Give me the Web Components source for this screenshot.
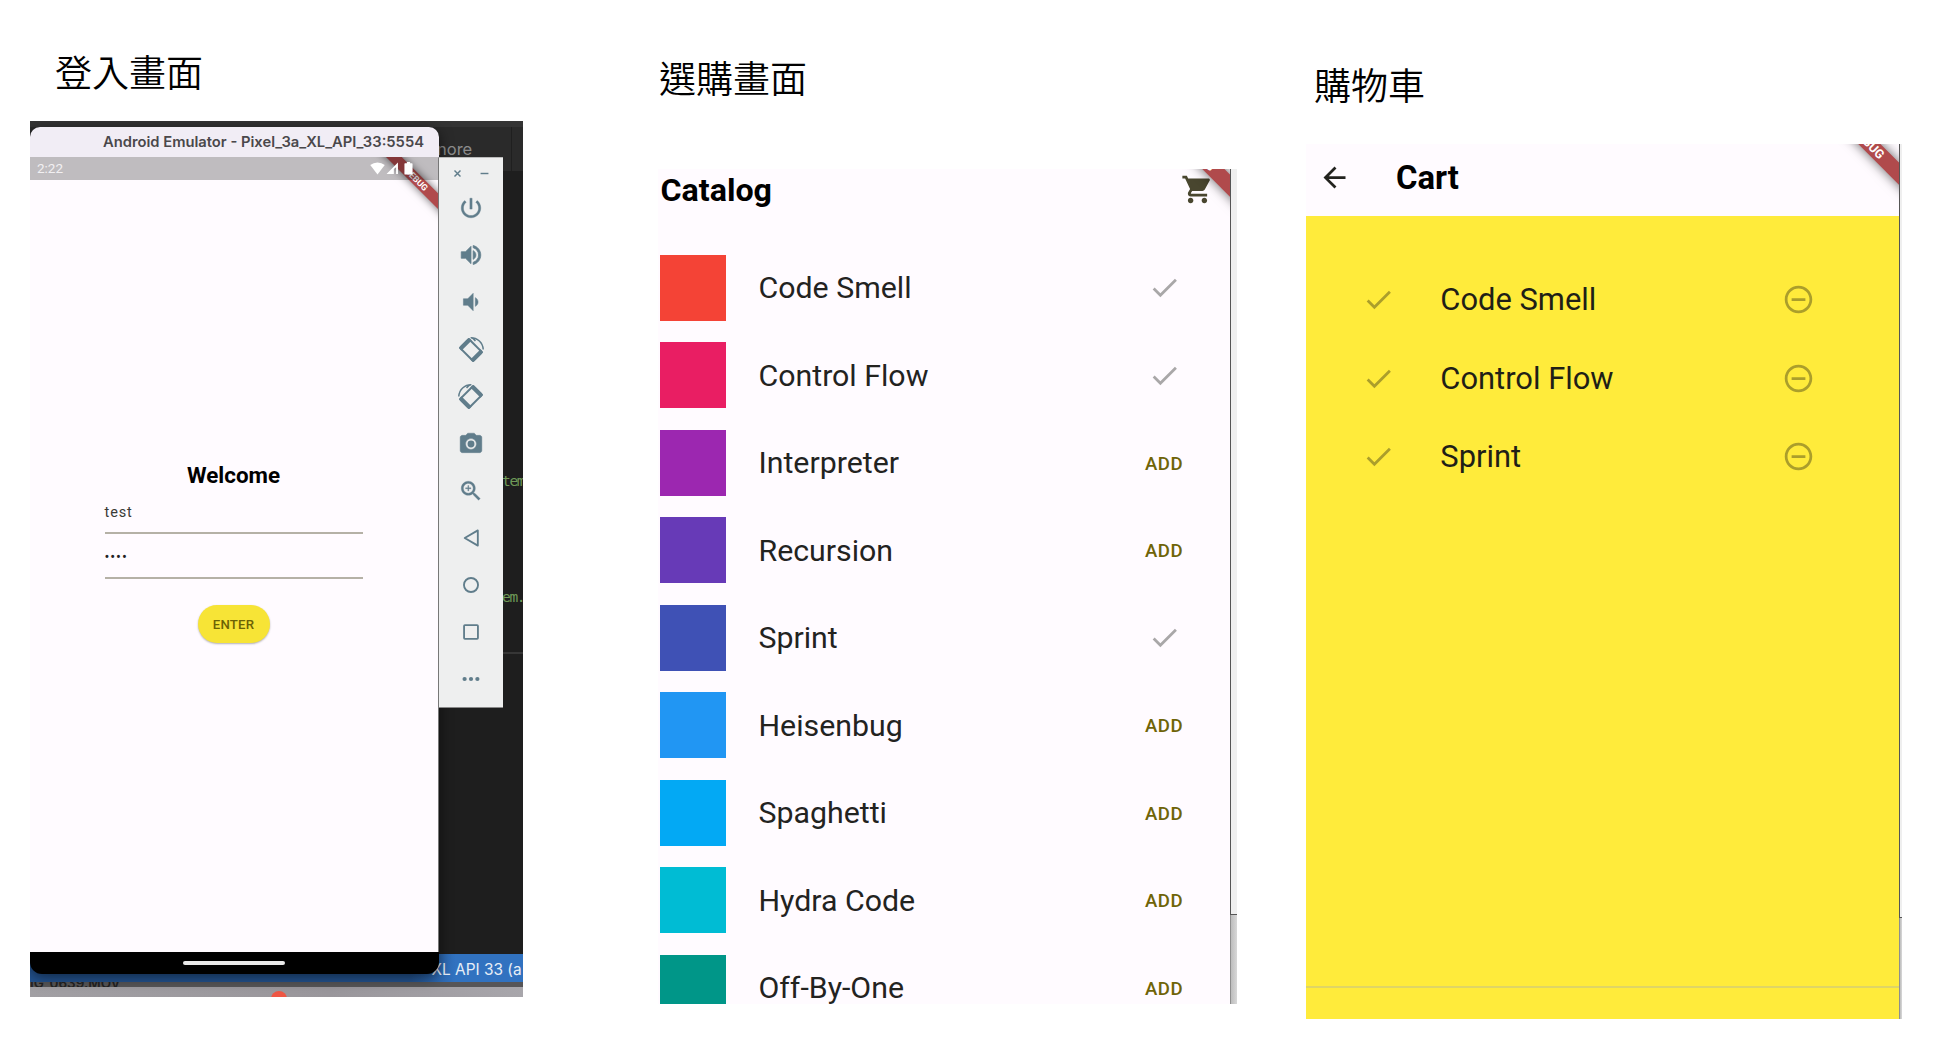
<!DOCTYPE html>
<html lang="zh-Hant">
<head>
<meta charset="utf-8">
<title>登入、選購、購物車</title>
<style>
body{margin:0;background:#fff;display:flex;align-items:flex-start;width:1944px;height:1046px;overflow:hidden;font-family:Roboto,"Liberation Sans",sans-serif}
</style>
</head>
<body>
<screen-figure label="登入畫面" style="--left:30px;--top:44px;--indent:25px;--gap:23px;--w:493px"><emulator-desktop></emulator-desktop></screen-figure>
<screen-figure label="選購畫面" style="--left:135px;--top:50px;--indent:1px;--gap:65px;--w:579px"><catalog-screen></catalog-screen></screen-figure>
<screen-figure label="購物車" style="--left:69px;--top:57px;--indent:8px;--gap:33px;--w:596px"><cart-screen></cart-screen></screen-figure>
<script>
function define(name, render) {
  customElements.define(name, class extends HTMLElement {
    connectedCallback() {
      if (this.shadowRoot) return;
      this.attachShadow({mode: 'open'}).innerHTML = render(this);
    }
  });
}

const ICONS = {
  check: '<path d="M9 16.17 4.83 12l-1.42 1.41L9 19 21 7l-1.41-1.41z"/>',
  cart: '<path d="M7 18c-1.1 0-1.99.9-1.99 2S5.9 22 7 22s2-.9 2-2-.9-2-2-2zM1 2v2h2l3.6 7.59-1.35 2.45c-.16.28-.25.61-.25.96 0 1.1.9 2 2 2h12v-2H7.42c-.14 0-.25-.11-.25-.25l.03-.12.9-1.63h7.45c.75 0 1.41-.41 1.75-1.03l3.58-6.49c.08-.14.12-.31.12-.48 0-.55-.45-1-1-1H5.21l-.94-2H1zm16 16c-1.1 0-1.99.9-1.99 2s.89 2 1.99 2 2-.9 2-2-.9-2-2-2z"/>',
  back: '<path d="M20 11H7.83l5.59-5.59L12 4l-8 8 8 8 1.41-1.41L7.83 13H20v-2z"/>',
  remove: '<path d="M7 11v2h10v-2H7zm5-9C6.48 2 2 6.48 2 12s4.48 10 10 10 10-4.48 10-10S17.52 2 12 2zm0 18c-4.41 0-8-3.59-8-8s3.59-8 8-8 8 3.59 8 8-3.59 8-8 8z"/>',
  power: '<path d="M13 3h-2v10h2V3zm4.83 2.17-1.42 1.42C17.99 7.86 19 9.81 19 12c0 3.87-3.13 7-7 7s-7-3.13-7-7c0-2.19 1.01-4.14 2.58-5.42L6.17 5.17C4.23 6.82 3 9.26 3 12c0 4.97 4.03 9 9 9s9-4.03 9-9c0-2.74-1.23-5.18-3.17-6.83z" stroke="currentColor" stroke-width=".4"/>',
  volup: '<path d="M3 9v6h4l5 5V4L7 9H3zm13.5 3c0-1.77-1.02-3.29-2.5-4.03v8.05c1.48-.73 2.5-2.25 2.5-4.02zM14 3.23v2.06c2.89.86 5 3.54 5 6.71s-2.11 5.85-5 6.71v2.06c4.01-.91 7-4.49 7-8.77s-2.99-7.86-7-8.77z" stroke="currentColor" stroke-width=".7"/>',
  voldown: '<path d="M18.5 12c0-1.77-1.02-3.29-2.5-4.03v8.05c1.48-.73 2.5-2.25 2.5-4.02zM5 9v6h4l5 5V4L9 9H5z" stroke="currentColor" stroke-width=".5"/>',
  rotright: '<g transform="rotate(45 12 12)"><rect x="3.4" y="6.2" width="17.2" height="11.6" rx="1" fill="none" stroke="currentColor" stroke-width="1.9"/><path d="M2.5 6.2q0-.9.9-.9h2.8v13.4H3.4q-.9 0-.9-.9zM21.5 6.2q0-.9-.9-.9h-2.8v13.4h2.8q.9 0 .9-.9z"/></g><path d="M11.7.7c6.3 0 11.2 4.5 11.6 10.8" fill="none" stroke="currentColor" stroke-width="1.4"/><path d="M11.5.1 15.6 4.2l1-1-1.6-2z"/>',
  camera: '<circle cx="12" cy="12" r="3.2"/><path d="M9 2 7.17 4H4c-1.1 0-2 .9-2 2v12c0 1.1.9 2 2 2h16c1.1 0 2-.9 2-2V6c0-1.1-.9-2-2-2h-3.17L15 2H9zm3 15c-2.76 0-5-2.24-5-5s2.24-5 5-5 5 2.24 5 5-2.24 5-5 5z" stroke="currentColor" stroke-width=".4"/>',
  zoom: '<path d="M15.5 14h-.79l-.28-.27C15.41 12.59 16 11.11 16 9.5 16 5.91 13.09 3 9.5 3S3 5.91 3 9.5 5.91 16 9.5 16c1.61 0 3.09-.59 4.23-1.57l.27.28v.79l5 4.99L20.49 19l-4.99-5zm-6 0C7.01 14 5 11.99 5 9.5S7.01 5 9.5 5 14 7.01 14 9.5 11.99 14 9.5 14zM12 9.9H9.9V12h-.8V9.9H7v-.8h2.1V7h.8v2.1H12z" stroke="currentColor" stroke-width=".3"/>',
  tri: '<path d="M18.3 5v14L6.2 12z" fill="none" stroke="currentColor" stroke-width="1.7" stroke-linejoin="round"/>',
  circle: '<circle cx="12" cy="12" r="6.5" fill="none" stroke="currentColor" stroke-width="1.7"/>',
  square: '<rect x="5.6" y="5.6" width="12.8" height="12.8" rx=".8" fill="none" stroke="currentColor" stroke-width="1.7"/>',
  dots: '<circle cx="6.1" cy="12" r="1.95"/><circle cx="12" cy="12" r="1.95"/><circle cx="17.9" cy="12" r="1.95"/>',
  close: '<path d="M4 4l16 16M20 4 4 20" fill="none" stroke="currentColor" stroke-width="3.8"/>',
  minus: '<path d="M1.5 12h21" fill="none" stroke="currentColor" stroke-width="3.8"/>',
  wifi: '<path d="M12 21.500.4 6.500Q5.500 2.500 12 2.500t11.600 4z"/>',
  signal: '<path d="M1 22 22 1v21h-3.300V9.500L14.500 13v9z"/><path d="M19 9v13h3V1z" opacity=".45"/>',
  battery: '<path d="M9 0h6v2.500h3.300q1.200 0 1.200 1.200V22q0 1.200-1.200 1.200H5.700q-1.200 0-1.200-1.200V3.700q0-1.200 1.200-1.200H9z"/>'
};
ICONS.rotleft = `<g transform="matrix(-1 0 0 1 24 0)">${ICONS.rotright}</g>`;

define('ui-icon', el => `<style>
:host{display:block;flex:none;width:var(--size,33px);height:var(--size,33px)}
svg{display:block;width:100%;height:100%;fill:currentColor;overflow:visible}
</style><svg viewBox="0 0 24 24">${ICONS[el.getAttribute('name')]}</svg>`);

define('screen-figure', el => `<style>
:host{display:flex;flex-direction:column;flex:none;gap:var(--gap);width:var(--w);margin-left:var(--left);padding-top:var(--top)}
h2{margin:0;padding-left:var(--indent);height:54px;font:350 37px/54px "Noto Sans CJK TC",sans-serif;color:#000;white-space:nowrap}
</style><h2>${el.getAttribute('label')}</h2><slot></slot>`);

/* Corner banner; it sits over the top right corner of the app below it. */
define('debug-ribbon', () => `<style>
:host{position:absolute;right:0;top:var(--shift,0px);width:calc(60px*var(--k,1));height:calc(60px*var(--k,1));pointer-events:none}
svg{display:block;width:100%;height:100%;overflow:visible}
polygon{fill:#b04a4c;filter:drop-shadow(0 0 4px rgba(0,0,0,.6))}
text{font:700 8.8px Roboto,sans-serif;fill:#fff;text-anchor:middle}
</style><svg viewBox="0 0 60 60"><polygon points="-2,-10 13.7,-10 70,46.3 70,62"/><text transform="translate(38.5 22.5) rotate(45)" y="3">DEBUG</text></svg>`);

define('edge-strip', () => `<style>
:host{display:flex;flex-direction:column;flex:none;width:var(--w)}
.a{height:var(--h);box-sizing:border-box;background:#efefef;border-left:1px solid #555;border-bottom:1px solid #555}
.b{flex:1;background:linear-gradient(90deg,#bdbdbd,#d8d8d8);border-left:1px solid #8e8e8e}
</style><div class="a"></div><div class="b"></div>`);

define('catalog-row', el => `<style>
:host{display:flex;align-items:center;flex:none;height:87.5px;padding-left:2.4px}
.sw{width:65.6px;height:66px;background:${el.getAttribute('color')}}
.name{flex:1;padding-left:32.5px;font-size:30.3px;color:#23231f;white-space:nowrap}
.act{width:132px;display:flex;justify-content:center;color:#a9a7a8}
.add{font-size:18.6px;font-weight:500;letter-spacing:.5px;color:#6f6408;padding-top:1.5px}
</style><div class="sw"></div><div class="name"><slot></slot></div>
<div class="act">${el.hasAttribute('added') ? '<ui-icon name="check"></ui-icon>' : '<span class="add">ADD</span>'}</div>`);

define('catalog-screen', () => `<style>
:host{display:flex;height:835px;overflow:hidden}
.app{position:relative;flex:1;overflow:hidden;background:#fffbff;display:flex;flex-direction:column}
header{display:flex;align-items:center;justify-content:space-between;flex:none;height:40px;margin-bottom:35px;padding:0 16.5px 0 2.5px;color:#49462f}
h1{margin:2px 0 0;font-size:32.2px;line-height:40px;font-weight:700;color:#000}
debug-ribbon{--k:1.41;--shift:-46px}
edge-strip{--w:7px;--h:746px}
</style><div class="app"><header><h1>Catalog</h1><ui-icon name="cart"></ui-icon></header>
<catalog-row color="#f44336" added>Code Smell</catalog-row>
<catalog-row color="#e91e63" added>Control Flow</catalog-row>
<catalog-row color="#9c27b0">Interpreter</catalog-row>
<catalog-row color="#673ab7">Recursion</catalog-row>
<catalog-row color="#3f51b5" added>Sprint</catalog-row>
<catalog-row color="#2196f3">Heisenbug</catalog-row>
<catalog-row color="#03a9f4">Spaghetti</catalog-row>
<catalog-row color="#00bcd4">Hydra Code</catalog-row>
<catalog-row color="#009688">Off-By-One</catalog-row>
<debug-ribbon></debug-ribbon></div><edge-strip></edge-strip>`);

define('cart-row', () => `<style>
:host{display:flex;align-items:center;gap:44px;height:78.3px;padding:0 84.5px 0 56.3px;color:#ab9e2b}
.name{flex:1;padding-left:1px;font-size:30.9px;color:#1f1f17;white-space:nowrap}
</style><ui-icon name="check"></ui-icon><div class="name"><slot></slot></div><ui-icon name="remove"></ui-icon>`);

define('cart-screen', () => `<style>
:host{display:flex;height:875px;overflow:hidden}
.app{position:relative;flex:1;overflow:hidden;background:#fffbff;display:flex;flex-direction:column}
header{display:flex;align-items:center;gap:45px;flex:none;box-sizing:border-box;height:72px;padding:0 12px 6px;color:#23231f}
h1{margin:2px 0 0;font-size:32.8px;line-height:40px;font-weight:700;color:#000}
.list{flex:1;background:#ffeb3b;padding-top:44.8px}
.total{flex:none;height:31px;background:#ffeb3b;border-top:2px solid #dfd565}
debug-ribbon{--k:1.41;--shift:-33px}
edge-strip{--w:3px;--h:774px}
</style><div class="app"><header><ui-icon name="back"></ui-icon><h1>Cart</h1></header>
<div class="list"><cart-row>Code Smell</cart-row><cart-row>Control Flow</cart-row><cart-row>Sprint</cart-row></div>
<div class="total"></div><debug-ribbon></debug-ribbon></div><edge-strip></edge-strip>`);

define('login-form', () => `<style>
:host{display:flex;flex-direction:column;align-items:center;color:#3a3a36}
h1{margin:0;font-size:22.4px;line-height:30px;font-weight:700;color:#000}
.field{box-sizing:border-box;width:258px;border-bottom:2px solid #b5b1a6;font-size:14.5px;letter-spacing:.9px;line-height:20px}
.u{height:44px;padding-top:13px}.p{height:45px;padding-top:14px;color:#222}
button{margin:26px 0 0 0;width:72px;height:38px;border:0;padding:0;border-radius:20px;background:#f7e436;box-shadow:0 1px 2px rgba(0,0,0,.3);font:500 13.2px Roboto,sans-serif;letter-spacing:.2px;color:#6c6205}
</style><h1>Welcome</h1><div class="field u">test</div><div class="field p">••••</div><button>ENTER</button>`);

define('phone-window', () => `<style>
:host{display:flex;flex-direction:column;overflow:hidden;border-radius:10px 10px 12px 12px;background:#000}
.title{flex:none;height:30px;box-sizing:border-box;background:#f1edf5;padding-right:15px;text-align:right;font:600 14.75px/30px Inter,sans-serif;color:#4a484b;white-space:nowrap}
.app{position:relative;flex:none;height:795px;overflow:hidden;background:#fffbff;border-right:1px solid #777;box-sizing:border-box;display:flex;flex-direction:column}
.status{position:relative;z-index:1;display:flex;align-items:center;height:22.5px;padding:0 23.5px 0 7px;background:rgba(0,0,0,.25);color:#fff;font-size:13.5px}
.status span{flex:1;color:#f2f0f2}
login-form{margin-top:280.5px;padding-right:1px}
.nav{flex:1;display:flex;justify-content:center;align-items:center;padding-right:2px}
.nav i{display:block;width:102px;height:4px;border-radius:2px;background:#e9e9e9}
</style><div class="title">Android Emulator - Pixel_3a_XL_API_33:5554</div>
<div class="app"><div class="status"><span>2:22</span><ui-icon name="wifi" style="--size:15px"></ui-icon><ui-icon name="signal" style="--size:13px;margin-left:1px"></ui-icon><ui-icon name="battery" style="--size:13px;margin-left:3px"></ui-icon></div>
<login-form></login-form><debug-ribbon></debug-ribbon></div><div class="nav"><i></i></div>`);

define('emulator-toolbar', () => `<style>
:host{display:flex;flex-direction:column;box-sizing:border-box;background:#eeefef;border:solid #bbb;border-width:1px 0 1px 1px;border-left-color:#777;border-bottom-color:#888;color:#607d8b;align-items:center}
.win{display:flex;gap:18px;height:26px;align-items:center;--size:9px;padding:2px 1px 0 0}
.tools{display:flex;flex-direction:column;gap:21.1px;--size:26px;padding:9.3px 1px 0 0}
</style><div class="win"><ui-icon name="close"></ui-icon><ui-icon name="minus"></ui-icon></div>
<div class="tools">${['power','volup','voldown','rotright','rotleft','camera','zoom','tri','circle','square','dots'].map(n => `<ui-icon name="${n}"></ui-icon>`).join('')}</div>`);

/* Windows lie freely on the desktop, so they are placed by offset. */
define('emulator-desktop', () => `<style>
:host{display:block;position:relative;height:876px;overflow:hidden;background:#1e1e1e}
.bar,.win,.txt{position:absolute}
.txt{white-space:nowrap}
.tabs{left:0;right:0;top:0;height:50px;background:linear-gradient(#343434 6px,#2a2a2a 6px)}
.tabs:after{content:"";position:absolute;left:481px;top:6px;width:1px;height:44px;background:#1f1f1f}
.rule{left:473px;right:0;top:531px;height:2px;background:#363636}
.blue{left:0;right:0;top:833px;height:28px;background:linear-gradient(90deg,#235390 0,#235390 380px,#3172c0 425px)}
.dark{left:0;right:0;top:861px;height:6px;background:#565557;overflow:hidden;display:flex;align-items:flex-end}
.dark span{font:600 13.5px/14px Inter,sans-serif;color:#222;margin-bottom:-2px;white-space:nowrap}
.dock{left:0;right:0;top:866px;height:10px;background:linear-gradient(90deg,#a19fa3,#99969b 300px,#a8a6ab);overflow:hidden}
.dock i{display:block;width:16px;height:16px;border-radius:8px;background:#ee5644;margin:4px 0 0 241px}
.code{font:14.5px/20px "DejaVu Sans Mono",monospace;letter-spacing:-1.3px;color:#6f9a58}
phone-window{left:0;top:6px;width:409px;height:847px;box-shadow:0 3px 14px rgba(0,0,0,.55)}
emulator-toolbar{left:408px;top:36px;width:65px;height:551px}
</style>
<div class="bar tabs"></div><div class="txt" style="left:407px;top:16px;font:16.5px/24px Inter,sans-serif;color:#8b8b8b">nore</div>
<div class="txt code" style="left:472px;top:350px">tem</div><div class="txt code" style="left:472px;top:466px">em.</div>
<div class="bar rule"></div><div class="bar blue"></div><div class="bar dark"><span>IG_0639.MOV</span></div><div class="bar dock"><i></i></div>
<div class="txt" style="left:401.5px;top:837px;font:15.4px/24px Inter,sans-serif;color:#e6edf6">XL API 33 (a</div>
<phone-window class="win"></phone-window><emulator-toolbar class="win"></emulator-toolbar>`);
</script>
</body>
</html>
